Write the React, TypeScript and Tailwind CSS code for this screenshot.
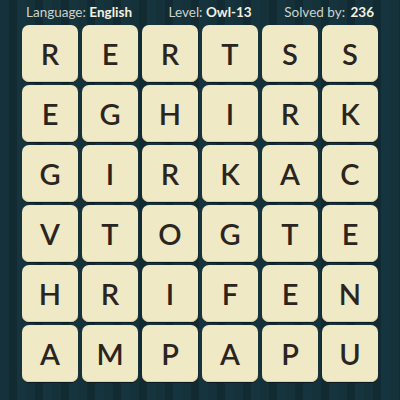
const rows = ["RERTSS", "EGHIRK", "GIRKAC", "VTOGTE", "HRIFEN", "AMPAPU"];

function Tile({ letter }: { letter: string }) {
  return (
    <div className="flex h-[57px] w-[56px] items-center justify-center rounded-[7px] bg-[#f0e9c6] shadow-[0_1px_0_#0a1a1f,inset_0_-1px_0_#d9d1a8] text-[29px] font-semibold leading-none text-[#2a2520]">
      {letter}
    </div>
  );
}

export default function App() {
  return (
    <div
      className="flex h-[400px] w-[400px] flex-col bg-[#14303a] bg-[repeating-linear-gradient(90deg,#15323b_0px,#15323b_9px,#122b32_9px,#122b32_17px,#16343e_17px,#16343e_26px)] font-['Lato','Noto_Sans',sans-serif]"
    >
      <header className="flex h-[25px] items-center justify-between pl-[26px] pr-[26px] text-[13.5px] text-[#cdd3cc]">
        <span>
          Language: <b className="font-bold text-[#f4f1e2]">English</b>
        </span>
        <span className="pl-[4px]">
          Level: <b className="font-bold text-[#f4f1e2]">Owl-13</b>
        </span>
        <span>
          Solved by: <b className="ml-[2px] font-bold text-[#f4f1e2]">236</b>
        </span>
      </header>
      <div className="ml-[22px] grid w-fit grid-cols-6 gap-x-[4px] gap-y-[3px]">
        {rows.map((row, r) =>
          row.split("").map((ch, c) => <Tile key={`${r}-${c}`} letter={ch} />)
        )}
      </div>
    </div>
  );
}
